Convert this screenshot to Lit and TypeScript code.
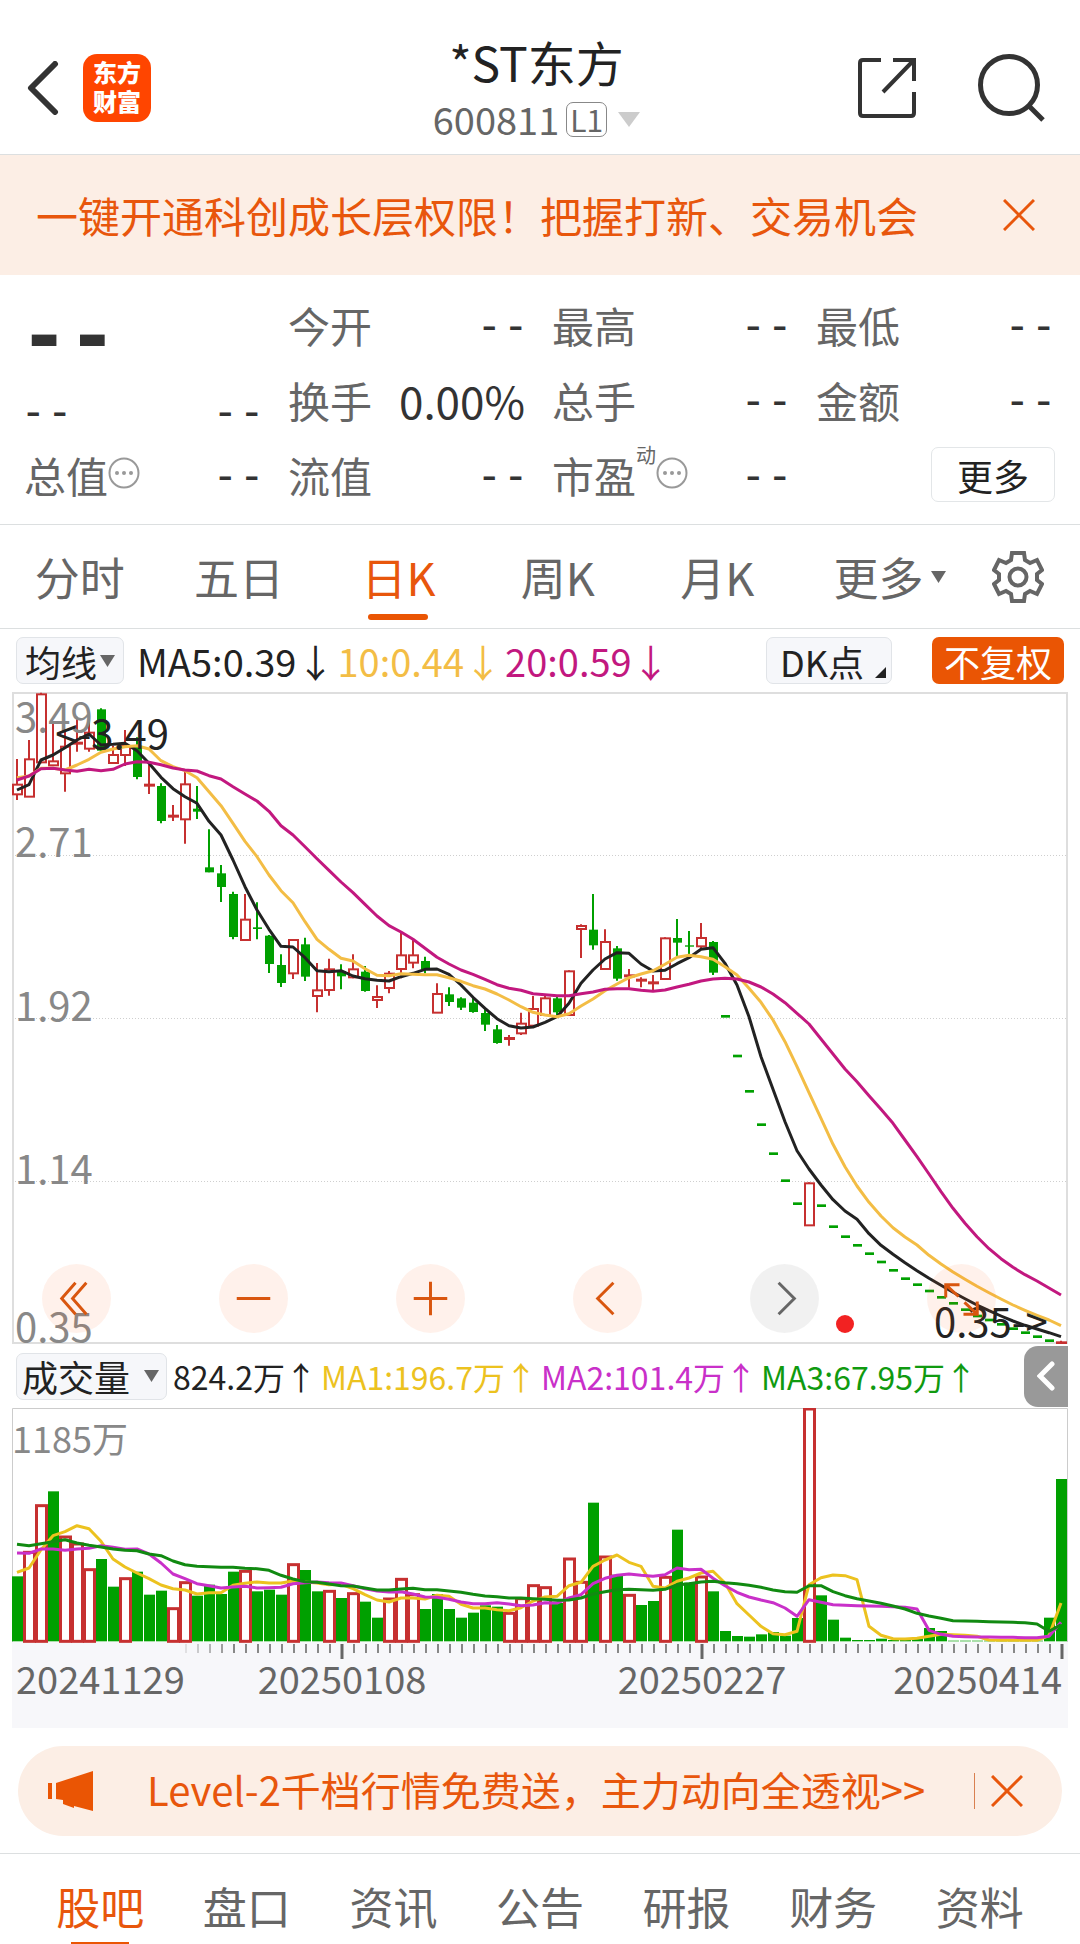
import { LitElement, html, svg, css } from "lit";
import { customElement, state } from "lit/decorators.js";
import { classMap } from "lit/directives/class-map.js";

/* Vertical chart values are stored in thirds of a pixel. */
const UNIT = 3;
const STEP = 12;
const FIRST_X = 5;

type Candle = ["u" | "d", number, number, number, number];

/* direction, high, body top, body bottom, low */
const CANDLES: Candle[] = [
  ["u", 201, 275, 307, 324], ["u", 144, 199, 314, 314], ["u", 2, 4, 211, 214], ["u", 94, 205, 220, 220],
  ["u", 114, 161, 244, 299], ["u", 74, 149, 157, 179], ["u", 62, 119, 170, 179], ["d", 49, 52, 176, 176],
  ["u", 161, 186, 213, 213], ["u", 114, 159, 189, 222], ["d", 136, 164, 255, 262], ["u", 219, 275, 281, 306],
  ["d", 274, 282, 387, 394], ["u", 339, 368, 374, 387], ["u", 236, 274, 382, 455], ["d", 282, 350, 359, 381],
  ["d", 412, 526, 541, 541], ["d", 519, 544, 585, 630], ["d", 599, 606, 735, 742], ["u", 606, 680, 744, 744],
  ["d", 631, 706, 711, 742], ["d", 729, 731, 816, 843], ["d", 787, 819, 873, 885], ["u", 741, 741, 844, 861],
  ["d", 737, 757, 854, 867], ["u", 813, 892, 912, 961], ["u", 800, 829, 894, 911], ["d", 817, 837, 853, 892],
  ["u", 787, 829, 856, 859], ["d", 822, 839, 897, 899], ["u", 880, 912, 924, 948], ["u", 837, 842, 888, 904],
  ["u", 722, 787, 831, 859], ["u", 739, 787, 812, 829], ["d", 794, 807, 831, 844], ["u", 874, 903, 962, 962],
  ["d", 886, 907, 930, 942], ["d", 916, 919, 947, 954], ["d", 919, 932, 960, 962], ["d", 952, 963, 998, 1017],
  ["d", 999, 1012, 1053, 1055], ["u", 1029, 1035, 1043, 1061], ["u", 962, 992, 1024, 1029], ["u", 912, 948, 1001, 1003],
  ["u", 909, 916, 969, 969], ["d", 912, 919, 961, 969], ["u", 835, 835, 969, 969], ["u", 697, 699, 711, 798],
  ["d", 606, 713, 760, 773], ["u", 712, 747, 831, 831], ["d", 762, 769, 860, 866], ["u", 831, 847, 854, 887],
  ["u", 856, 860, 867, 886], ["u", 849, 868, 875, 894], ["u", 736, 736, 861, 861], ["d", 681, 738, 752, 794],
  ["d", 717, 760, 764, 786], ["u", 693, 735, 763, 772], ["d", 747, 750, 842, 849],
  ...[973, 1092, 1198, 1298, 1385, 1466, 1535].map((y): Candle => ["d", y, y - 4, y + 4, y]),
  ["u", 1471, 1471, 1600, 1600],
  ...[1541, 1604, 1634, 1660, 1685, 1710, 1735, 1760, 1778, 1797, 1816, 1834, 1853, 1872, 1884, 1897, 1910, 1922, 1934, 1946].map(
    (y): Candle => ["d", y, y - 4, y + 4, y],
  ),
  ["u", 1946, 1948, 1956, 1956],
];

const MA5 = [
  294, 278, 204, 189, 167, 144, 126, 159, 157, 154, 176, 214, 256, 290, 314, 334, 388, 429, 504, 584, 654, 712, 763, 765,
  797, 836, 839, 836, 852, 860, 865, 867, 854, 844, 832, 831, 847, 879, 916, 949, 980, 1001, 1008, 1005, 991, 974, 934, 874,
  834, 801, 782, 784, 816, 837, 835, 815, 797, 772, 767, 814, 879, 974, 1094, 1192, 1289, 1376, 1431, 1479, 1523, 1557, 1582,
  1625, 1660, 1687, 1712, 1736, 1759, 1780, 1801, 1820, 1839, 1856, 1872, 1887, 1900, 1911, 1922, 1934,
];
const MA10 = [
  257, 252, 229, 229, 234, 219, 202, 181, 171, 164, 161, 171, 206, 224, 236, 257, 299, 341, 394, 448, 494, 549, 596, 632,
  689, 742, 772, 799, 807, 830, 850, 851, 845, 847, 848, 848, 857, 868, 881, 891, 906, 924, 944, 961, 969, 974, 965, 942, 921,
  896, 876, 857, 846, 836, 817, 796, 790, 794, 802, 824, 849, 889, 931, 984, 1049, 1124, 1202, 1279, 1357, 1424, 1482, 1531,
  1572, 1607, 1635, 1659, 1690, 1716, 1740, 1762, 1783, 1802, 1821, 1839, 1855, 1870, 1884, 1901,
];
const MA20 = [
  264, 252, 230, 229, 234, 238, 232, 236, 232, 216, 209, 211, 218, 228, 234, 237, 251, 261, 284, 306, 327, 358, 401, 429,
  464, 500, 535, 570, 602, 637, 672, 701, 720, 742, 769, 796, 816, 834, 847, 862, 878, 889, 895, 905, 908, 911, 911, 905, 900,
  892, 890, 890, 895, 898, 894, 885, 877, 867, 861, 859, 861, 870, 885, 906, 932, 964, 996, 1041, 1086, 1131, 1169, 1211, 1252,
  1294, 1344, 1394, 1446, 1499, 1549, 1594, 1634, 1670, 1700, 1726, 1748, 1767, 1788, 1809,
];

const VOLUME_BASE = 700;
const VOLUME_TOPS = [
  505, 430, 290, 250, 384, 405, 482, 453, 536, 509, 491, 560, 548, 599, 521, 563, 530, 558, 491, 487, 550, 545, 560, 467, 486,
  550, 547, 570, 554, 581, 629, 570, 511, 557, 603, 558, 603, 629, 614, 592, 596, 613, 569, 530, 536, 585, 450, 520, 284, 444,
  500, 559, 591, 579, 505, 365, 524, 504, 550, 669, 684, 686, 679, 672, 683, 630, 0, 562, 635, 689, 696, 696, 692, 696, 693,
  691, 660, 669, 698, 698, 698, 698, 698, 698, 698, 698, 629, 213,
];
const VOLUME_RISING = new Set([1, 2, 4, 5, 6, 9, 13, 14, 19, 23, 26, 28, 31, 32, 33, 41, 42, 43, 44, 46, 47, 49, 51, 54, 57, 66]);

const VMA1 = [
  493, 480, 425, 383, 371, 353, 362, 400, 453, 477, 495, 512, 531, 542, 546, 558, 554, 554, 532, 526, 522, 525, 525, 519, 522,
  525, 530, 529, 542, 560, 576, 582, 570, 570, 573, 562, 565, 589, 600, 600, 605, 608, 599, 579, 567, 565, 533, 523, 475, 456,
  441, 463, 475, 535, 540, 520, 510, 495, 490, 525, 587, 621, 655, 677, 680, 670, 530, 509, 501, 503, 515, 655, 682, 692, 693,
  691, 685, 679, 680, 682, 685, 696, 697, 697, 697, 697, 683, 585,
];
const VMA2 = [
  435, 436, 423, 423, 427, 423, 421, 413, 418, 424, 423, 438, 465, 498, 512, 527, 533, 540, 537, 535, 540, 539, 538, 527, 524,
  522, 524, 525, 533, 542, 549, 552, 551, 558, 567, 568, 574, 582, 587, 587, 584, 588, 593, 591, 584, 585, 570, 560, 527, 511,
  502, 498, 502, 505, 500, 480, 485, 484, 511, 533, 553, 567, 576, 584, 600, 625, 575, 583, 590, 592, 593, 594, 595, 596, 598,
  603, 667, 679, 685, 686, 687, 687, 688, 688, 689, 689, 685, 643,
];
const VMA3 = [
  409, 413, 407, 401, 395, 405, 412, 417, 423, 427, 428, 438, 443, 459, 470, 475, 476, 478, 478, 481, 482, 487, 502, 513, 521,
  523, 528, 533, 534, 540, 546, 546, 543, 541, 545, 545, 549, 553, 559, 564, 566, 570, 570, 572, 574, 577, 576, 570, 558, 551,
  545, 544, 545, 547, 544, 531, 527, 522, 520, 524, 527, 532, 538, 546, 551, 553, 533, 533, 551, 563, 572, 579, 586, 594, 603,
  616, 624, 631, 638, 639, 640, 641, 642, 643, 644, 648, 670, 650,
];

const centre = (i: number) => FIRST_X + i * STEP;
const points = (values: number[]) => values.map((v, i) => `${centre(i)},${(v / UNIT).toFixed(1)}`).join(" ");

const baseStyles = css`
  * { box-sizing: border-box; }
  button, a {
    font: inherit; color: inherit; background: none; border: 0;
    padding: 0; margin: 0; text-decoration: none; cursor: pointer;
  }
  svg { display: block; flex: none; }
`;

@customElement("price-chart")
export class PriceChart extends LitElement {
  static styles = css`
    :host { display: block; }
    .plot { display: block; width: 100%; height: auto; }
    .frame { fill: none; stroke: #dedede; stroke-width: 2; }
    .grid { stroke: #cfcfcf; stroke-dasharray: 1 2; }
    .line { fill: none; stroke-width: 3; stroke-linejoin: round; }
    .ma5 { stroke: #222; }
    .ma10 { stroke: #f3bd45; }
    .ma20 { stroke: #c2187f; }
    .up { stroke: #c63030; stroke-width: 2; fill: #fff; }
    .solid { fill: #c63030; }
    .down { stroke: #00a000; stroke-width: 2; }
    .down-body { fill: #00a000; }
    .axis { font-size: 40px; fill: #888; }
    .mark { font-size: 40px; fill: #222; }
  `;

  private candle([dir, high, top, bottom, low]: Candle, i: number) {
    const x = centre(i);
    const y = top / UNIT;
    const h = (bottom - top) / UNIT;
    if (dir === "d") {
      return svg`<line class="down" x1=${x} x2=${x} y1=${high / UNIT} y2=${low / UNIT} />
        <rect class="down-body" x=${x - 4} width="9" y=${y} height=${h} />`;
    }
    const thin = h < 3;
    return svg`<line class="up" x1=${x} x2=${x} y1=${high / UNIT} y2=${low / UNIT} />
      <rect class=${thin ? "solid" : "up"} x=${thin ? x - 5 : x - 4} width=${thin ? 11 : 9} y=${y + (thin ? 0 : 1)}
        height=${thin ? 3 : h - 1} />`;
  }

  render() {
    return html`<svg class="plot" viewBox="0 0 1056 652" role="img" aria-label="日K">
      ${[163, 326, 489].map((y) => svg`<line class="grid" x1="0" x2="1056" y1=${y + 0.5} y2=${y + 0.5} />`)}
      <rect class="frame" x="1" y="1" width="1054" height="650" />
      ${CANDLES.map((c, i) => this.candle(c, i))}
      <text class="axis" x="3" y="40">3.49</text>
      <text class="axis" x="3" y="165">2.71</text>
      <text class="axis" x="3" y="329">1.92</text>
      <text class="axis" x="3" y="492">1.14</text>
      <text class="axis" x="3" y="650">0.35</text>
      <polyline class="line ma5" points=${points(MA5)} />
      <polyline class="line ma10" points=${points(MA10)} />
      <polyline class="line ma20" points=${points(MA20)} />
      <text class="mark" x="157" y="57" text-anchor="end">&lt;-3.49</text>
      <text class="mark" x="922" y="645">0.35-&gt;</text>
    </svg>`;
  }
}

@customElement("volume-chart")
export class VolumeChart extends LitElement {
  static styles = css`
    :host { display: block; }
    .plot { display: block; width: 100%; height: auto; }
    .strip { fill: #f7f7fa; }
    .frame { fill: none; stroke: #ccc; }
    .up { fill: #fff; stroke: #c63030; stroke-width: 3; }
    .down { fill: #00a000; }
    .line { fill: none; stroke-width: 3; stroke-linejoin: round; }
    .v1 { stroke: #ecc21f; }
    .v2 { stroke: #c930c9; }
    .v3 { stroke: #118a11; }
    .tick { stroke: #888; stroke-width: 2; }
    .major { stroke: #666; stroke-width: 3; }
    .scale { font-size: 36px; fill: #888; }
    .date { font-size: 38px; fill: #666; }
  `;

  private tick(i: number) {
    const major = i === 27 || i === 57 || i === 87;
    const x = centre(i) + 1;
    return svg`<line class=${major ? "major" : "tick"} x1=${x} x2=${x} y1="236" y2=${major ? 251 : 245}
      opacity=${Math.min(1, (i - 13) / 5)} />`;
  }

  render() {
    return html`<svg class="plot" viewBox="0 0 1056 320" role="img" aria-label="成交量">
      <rect class="strip" x="0" y="234" width="1056" height="86" />
      <path class="frame" d="M.5 234V.5H1055.5V234" />
      <text class="scale" x="0" y="45">1185万</text>
      ${VOLUME_TOPS.map((top, i) => {
        const x = centre(i);
        const y = top / UNIT;
        const h = (VOLUME_BASE - top) / UNIT;
        return VOLUME_RISING.has(i)
          ? svg`<rect class="up" x=${x - 4.5} width="10" y=${y + 1} height=${h - 1} />`
          : svg`<rect class="down" x=${x - 5} width="11" y=${y} height=${h} />`;
      })}
      <polyline class="line v1" points=${points(VMA1)} />
      <polyline class="line v2" points=${points(VMA2)} />
      <polyline class="line v3" points=${points(VMA3)} />
      ${Array.from({ length: 74 }, (_, k) => this.tick(k + 14))}
      <text class="date" x="4" y="286">20241129</text>
      <text class="date" x="330" y="286" text-anchor="middle">20250108</text>
      <text class="date" x="690" y="286" text-anchor="middle">20250227</text>
      <text class="date" x="1050" y="286" text-anchor="end">20250414</text>
    </svg>`;
  }
}

const cross = (size: number) => html`<svg width=${size} height=${size} viewBox="0 0 32 32" fill="none" stroke="currentColor" stroke-width="3"><path d="M1 1 31 31M31 1 1 31" /></svg>`;
const caret = html`<svg width="15" height="12" viewBox="0 0 15 12"><path d="M0 0H15L7.500 12Z" fill="#666" /></svg>`;
const dots = html`<svg width="32" height="32" viewBox="0 0 32 32" fill="#999">
  <circle cx="16" cy="16" r="14.500" fill="none" stroke="#999" stroke-width="2" />
  <circle cx="9" cy="16" r="2" /><circle cx="16" cy="16" r="2" /><circle cx="23" cy="16" r="2" /></svg>`;

const TOOLS: { name: string; path: string; grey?: boolean }[] = [
  { name: "最早", path: "M34 19 20 35 34 51M45 19 31 35 45 51" },
  { name: "缩小", path: "M18 35H52" },
  { name: "放大", path: "M18 35H52M35 18V52" },
  { name: "左移", path: "M41 19 25 35 41 51" },
  { name: "右移", path: "M29 19 45 35 29 51", grey: true },
  { name: "全屏", path: "M19 34V21H33M20 22 32 33M38 39 50 50M51 38V51H37" },
];

@customElement("app-root")
export class AppRoot extends LitElement {
  static styles = [
    baseStyles,
    css`
      :host {
        display: block; background: #fff; color: #222; overflow: hidden;
        font-family: "Noto Sans CJK SC", "Noto Sans", sans-serif;
      }
      .header {
        display: grid; grid-template-columns: 1fr auto 1fr; align-items: center;
        height: 155px; padding: 22px 34px 0 27px; border-bottom: 1px solid #dcdfe0; color: #333;
      }
      .side { display: flex; align-items: center; gap: 24px; }
      .side.end { justify-content: flex-end; gap: 62px; }
      .logo {
        display: grid; place-content: center; width: 68px; height: 68px; border-radius: 14px;
        background: #ff4500; color: #fff; text-align: center; padding-bottom: 4px;
        font-size: 24px; line-height: 29px; font-weight: 900;
      }
      .title { padding-top: 6px; text-align: center; color: #222; }
      .name { margin: 0; font-size: 48px; line-height: 56px; font-weight: 400; }
      .code { display: flex; align-items: center; justify-content: center; gap: 7px; line-height: 60px; font-size: 38px; color: #666; }
      .level { border: 1px solid #888; border-radius: 7px; font-size: 30px; line-height: 33px; padding: 0 3px; }
      .code svg { margin-left: 4px; }
      .banner {
        display: flex; align-items: center; justify-content: space-between; height: 120px;
        padding: 0 45px 0 36px; background: #fceee5; color: #e8560c;
      }
      .banner-text { font-size: 42px; line-height: 60px; }
      .stats {
        display: grid; grid-template-columns: repeat(4, 1fr); column-gap: 30px;
        padding: 12px 30px 12px 24px; margin: 0; border-bottom: 1px solid #dcdfe0;
      }
      .column { display: flex; flex-direction: column; }
      .cell { display: flex; align-items: center; justify-content: space-between; height: 75px; }
      .cell dt { display: flex; align-items: center; font-size: 42px; line-height: 60px; color: #666; white-space: nowrap; }
      .cell dt svg { margin-bottom: 4px; }
      .cell dd { margin: 0 -3px 0 0; font-size: 44px; line-height: 60px; color: #333; white-space: nowrap; }
      .cell .none { font-family: "DejaVu Sans Mono", monospace; font-size: 44px; margin: 0 -7px 0 -4px; }
      .price { height: 97px; }
      .price .none { font-size: 80px; line-height: 80px; font-weight: 700; }
      .change { height: 53px; }
      .sup { font-size: 20px; align-self: flex-start; line-height: 20px; }
      .more {
        width: 124px; height: 55px; margin: 0 -5px 0 auto; border: 1px solid #e3e6e8; border-radius: 7px;
        font-size: 36px; line-height: 48px; color: #222;
      }
      .periods {
        display: grid; grid-template-columns: repeat(5, 1fr) 186px 97px; height: 104px;
        border-bottom: 1px solid #dcdfe0; color: #666; font-size: 45px; line-height: 60px;
      }
      .period { position: relative; display: flex; align-items: center; justify-content: center; gap: 8px; }
      .active { color: #e8560c; }
      .period.active::after {
        content: ""; position: absolute; bottom: 8px; width: 60px; height: 6px; border-radius: 3px; background: #ea5504;
      }
      .gear { display: flex; align-items: center; padding-left: 9px; }
      .legend { display: flex; align-items: center; height: 63px; padding: 0 16px; font-size: 38px; line-height: 48px; white-space: nowrap; }
      .chip {
        display: flex; align-items: center; justify-content: center; gap: 3px; height: 47px; border: 1px solid #e1e4e8;
        border-radius: 7px; background: #f6f7fa; font-size: 36px; line-height: 44px; color: #222; padding: 0 8px;
      }
      .averages { display: flex; padding-left: 13px; gap: 3px; }
      .c10 { color: #f3bd45; }
      .c20 { color: #c2187f; }
      .dk { margin-left: auto; align-items: flex-end; padding: 0 5px 0 13px; gap: 11px; }
      .dk svg { margin-bottom: 5px; }
      .adjust { margin-left: 40px; width: 132px; border: 0; background: #ea5504; color: #fff; }
      .charts { padding: 0 12px; }
      .stage { position: relative; }
      .tools { position: absolute; left: 30px; right: 72px; bottom: 11px; display: flex; justify-content: space-between; }
      .tool { width: 69px; height: 69px; border-radius: 50%; background: rgba(255, 96, 32, 0.09); color: #d9560f; }
      .tool.grey { background: rgba(0, 0, 0, 0.055); color: #666; }
      .dot { position: absolute; left: 78%; bottom: 11px; width: 18px; height: 18px; border-radius: 50%; background: #f22222; }
      .volume { padding: 0 0 0 4px; height: 64px; }
      .volume .chip { padding: 0 7px 0 5px; gap: 14px; }
      .vols { display: flex; flex: 1; padding-left: 6px; gap: 4px; font-size: 32px; }
      .c1 { color: #ecc21f; }
      .c2 { color: #c930c9; }
      .c3 { color: #109a10; }
      .fold {
        display: grid; place-items: center; width: 44px; height: 61px;
        border-radius: 14px 0 0 14px; background: #999;
      }
      .promo {
        display: flex; align-items: center; height: 90px; margin: 18px 18px 17px; padding: 0 39px 0 30px;
        border-radius: 45px; background: #fceee5; color: #e8560c; font-size: 40px; line-height: 60px; white-space: nowrap;
      }
      .promo-text { flex: 1; padding: 0 0 4px 54px; }
      .bar { width: 1px; height: 36px; background: #d98050; margin-right: 16px; }
      .sections {
        display: grid; grid-template-columns: repeat(7, 1fr); height: 91px; padding: 0 27px;
        border-top: 1px solid #dcdfe0; font-size: 44px; line-height: 60px; color: #666;
      }
      .section { position: relative; display: flex; justify-content: center; padding-top: 22px; }
      .section.active { color: #e8560c; }
      .section.active::after { content: ""; position: absolute; bottom: 0; width: 58px; height: 2px; background: #ea5504; }
    `,
  ];

  @state() private period = "日K";
  @state() private section = "股吧";

  private cell(label: unknown, value?: string) {
    return html`<div class="cell"><dt>${label}</dt><dd class=${value ? "" : "none"}>${value ?? "--"}</dd></div>`;
  }

  render() {
    return html`
      <header class="header">
        <div class="side">
          <button aria-label="返回">
            <svg width="32" height="54" viewBox="0 0 32 54" fill="none" stroke="#333" stroke-width="6"><path d="M28 3 4 27 28 51" stroke-linejoin="round" stroke-linecap="round" /></svg>
          </button>
          <a class="logo" href="#home">东方<br />财富</a>
        </div>
        <div class="title">
          <h1 class="name">*ST东方</h1>
          <div class="code">
            <span>600811</span><span class="level">L1</span>
            <svg width="22" height="15" viewBox="0 0 22 15"><path d="M0 0H22L11 15Z" fill="#ccc" /></svg>
          </div>
        </div>
        <div class="side end">
          <button aria-label="分享">
            <svg width="58" height="60" viewBox="0 0 58 60" fill="none" stroke="#333" stroke-width="4">
              <path d="M23 2H5Q2 2 2 5V55Q2 58 5 58H53Q56 58 56 55V34M35 2H56V23M55 3 25 34" />
            </svg>
          </button>
          <button aria-label="搜索">
            <svg width="68" height="70" viewBox="0 0 68 70" fill="none" stroke="#333" stroke-width="5">
              <circle cx="31" cy="32" r="28.500" /><path d="M51 53 65 67" />
            </svg>
          </button>
        </div>
      </header>

      <div class="banner">
        <a class="banner-text" href="#open">一键开通科创成长层权限！把握打新、交易机会</a>
        <button aria-label="关闭">${cross(32)}</button>
      </div>

      <dl class="stats">
        <div class="column">
          <div class="cell price"><dd class="none">--</dd></div>
          <div class="cell change"><dd class="none">--</dd><dd class="none">--</dd></div>
          ${this.cell(html`总值${dots}`)}
        </div>
        <div class="column">${this.cell("今开")}${this.cell("换手", "0.00%")}${this.cell("流值")}</div>
        <div class="column">
          ${this.cell("最高")}${this.cell("总手")}${this.cell(html`市盈<span class="sup">动</span>${dots}`)}
        </div>
        <div class="column">
          ${this.cell("最低")}${this.cell("金额")}
          <div class="cell"><button class="more">更多</button></div>
        </div>
      </dl>

      <nav class="periods">
        ${["分时", "五日", "日K", "周K", "月K"].map(
          (p) => html`<button class=${classMap({ period: true, active: p === this.period })} @click=${() => (this.period = p)}>${p}</button>`,
        )}
        <button class="period">更多${caret}</button>
        <button class="gear" aria-label="设置">
          <svg width="52" height="52" viewBox="0 0 52 52" fill="none" stroke="#666" stroke-width="4">
            <path d="M20 2H32L33 9 38 12 45 9 50 19 45 23V29L50 33 45 43 38 40 33 43 32 50H20L19 43 14 40 7 43 2 33 7 29V23L2 19 7 9 14 12 19 9Z" />
            <circle cx="26" cy="26" r="8.500" />
          </svg>
        </button>
      </nav>

      <div class="legend">
        <button class="chip">均线${caret}</button>
        <div class="averages">
          <span>MA5:0.39↓</span><span class="c10">10:0.44↓</span><span class="c20">20:0.59↓</span>
        </div>
        <button class="chip dk">DK点<svg width="11" height="11" viewBox="0 0 11 11"><path d="M11 0V11H0Z" fill="#222" /></svg></button>
        <button class="chip adjust">不复权</button>
      </div>

      <main class="charts">
        <div class="stage">
          <price-chart></price-chart>
          <div class="tools">
            ${TOOLS.map(
              (t) => html`<button class=${classMap({ tool: true, grey: !!t.grey })} aria-label=${t.name}>
                <svg width="69" height="69" viewBox="0 0 70 70" fill="none" stroke="currentColor" stroke-width="3"><path d=${t.path} /></svg>
              </button>`,
            )}
          </div>
          <span class="dot"></span>
        </div>
        <div class="legend volume">
          <button class="chip">成交量${caret}</button>
          <div class="vols">
            <span>824.2万↑</span><span class="c1">MA1:196.7万↑</span><span class="c2">MA2:101.4万↑</span><span class="c3">MA3:67.95万↑</span>
          </div>
          <button class="fold" aria-label="展开">
            <svg width="18" height="30" viewBox="0 0 18 30" fill="none" stroke="#fff" stroke-width="5"><path d="M15 3 3 15 15 27" stroke-linecap="round" /></svg>
          </button>
        </div>
        <volume-chart></volume-chart>
      </main>

      <aside class="promo">
        <svg width="45" height="40" viewBox="0 0 45 40" fill="#ea5504"><path d="M0 12H4V28H0ZM8 12 45 0V40L26 35V37L15 33V29L8 28Z" /></svg>
        <a class="promo-text" href="#level2">Level-2千档行情免费送，主力动向全透视&gt;&gt;</a>
        <span class="bar"></span>
        <button aria-label="关闭">${cross(32)}</button>
      </aside>

      <nav class="sections">
        ${["股吧", "盘口", "资讯", "公告", "研报", "财务", "资料"].map(
          (s) => html`<button class=${classMap({ section: true, active: s === this.section })} @click=${() => (this.section = s)}>${s}</button>`,
        )}
      </nav>
    `;
  }
}
